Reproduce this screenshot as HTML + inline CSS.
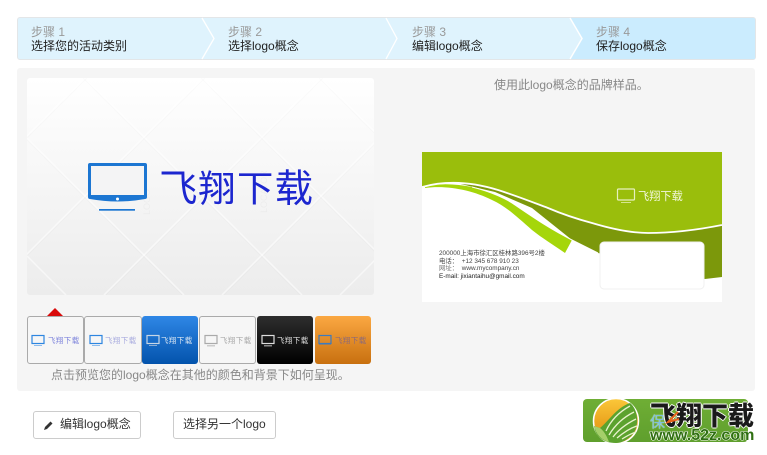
<!DOCTYPE html>
<html><head><meta charset="utf-8">
<style>
html,body{margin:0;padding:0;background:#fff;}
body{width:767px;height:455px;position:relative;overflow:hidden;font-family:"Liberation Sans","Noto Sans CJK SC",sans-serif;font-size:12px;}
.a{position:absolute;white-space:nowrap;}
.s1{color:#999;line-height:14px;font-size:12px;}
.s2{color:#222;line-height:14px;font-size:12px;}
.th{position:absolute;top:316px;height:46px;border:1px solid #aaa;border-radius:3px;box-sizing:content-box;overflow:hidden;}
.th svg{position:absolute;left:3px;top:17px;filter:blur(.3px);}
.th span{position:absolute;left:20px;top:18px;font-size:7.500px;line-height:12px;white-space:nowrap;letter-spacing:.4px;filter:blur(.3px);}
.btn{position:absolute;top:411px;height:26px;border:1px solid #ccc;border-radius:3px;background:#fff;color:#333;line-height:25px;font-size:12px;box-sizing:content-box;}
</style></head><body>

<!-- steps -->
<div class="a" style="left:17px;top:17px;width:739px;height:43px;background:#dff3fd;border:1px solid #e3e6e8;box-sizing:border-box;border-radius:3px;"></div>
<svg class="a" style="left:17px;top:17px" width="739" height="43">
<path d="M554 1 L566 21.500 L554 42 L738 42 L738 3 Q738 1 736 1 Z" fill="#cbecfe"/>
<path d="M185 1 L197 21.500 L185 42 M369 1 L380 21.500 L369 42 M553 1 L565 21.500 L553 42" fill="none" stroke="#fff" stroke-width="1.300"/>
</svg>
<div class="a s1" style="left:31px;top:25px">步骤 1</div>
<div class="a s2" style="left:31px;top:39px">选择您的活动类别</div>
<div class="a s1" style="left:228px;top:25px">步骤 2</div>
<div class="a s2" style="left:228px;top:39px">选择logo概念</div>
<div class="a s1" style="left:412px;top:25px">步骤 3</div>
<div class="a s2" style="left:412px;top:39px">编辑logo概念</div>
<div class="a s1" style="left:596px;top:25px">步骤 4</div>
<div class="a s2" style="left:596px;top:39px">保存logo概念</div>

<!-- panel -->
<div class="a" style="left:17px;top:68px;width:738px;height:323px;background:#f5f5f5;border-radius:3px;"></div>
<div class="a" style="left:494px;top:78px;color:#888;line-height:15px;">使用此logo概念的品牌样品。</div>

<!-- main preview -->
<div class="a" style="left:27px;top:78px;width:347px;height:217px;border-radius:3px;overflow:hidden;background:linear-gradient(#fff,#ececec);">
<svg width="347" height="217" style="position:absolute;left:0;top:0">
<g fill="none" stroke="#fff" stroke-opacity=".55" stroke-width="1.500">
<path d="M58 0 L-159 217 M176 0 L-41 217 M294 0 L77 217 M412 0 L195 217 M530 0 L313 217"/>
<path d="M58 0 L275 217 M176 0 L393 217 M294 0 L511 217 M-60 0 L157 217 M-178 0 L39 217"/>
</g>
<g fill="none" stroke="#000" stroke-opacity=".015" stroke-width="1">
<path d="M60 0 L-157 217 M178 0 L-39 217 M296 0 L79 217 M414 0 L197 217"/>
<path d="M56 0 L273 217 M174 0 L391 217 M292 0 L509 217 M-62 0 L155 217"/>
</g>
<g font-family="Liberation Sans" font-size="9" fill="#000" fill-opacity=".03">
<text transform="translate(123,137) rotate(-90)">LOGO</text>
<text transform="translate(240,135) rotate(-90)">LOCATOR</text>
</g>
</svg>
<svg style="position:absolute;left:61px;top:85px" width="60" height="48" viewBox="0 0 60 48">
<path d="M2 0 H57 Q59 0 59 2 V34 Q59 36 57 36 Q30 41 2 36 Q0 36 0 34 V2 Q0 0 2 0 Z" fill="#1c76d2"/>
<rect x="3" y="3" width="53" height="29" fill="#f4f4f5"/>
<circle cx="29.500" cy="36" r="1.500" fill="#fff"/>
<rect x="11" y="46" width="36" height="1.700" fill="#1c76d2"/>
</svg>
<div style="position:absolute;left:132px;top:87px;font-family:'IPAGothic','Noto Sans CJK SC',sans-serif;font-size:38.500px;line-height:46px;color:#1c26cf;white-space:nowrap;">飞翔下载</div>
</div>

<!-- marker -->
<svg class="a" style="left:47px;top:308px" width="18" height="9"><path d="M0 8 L8 0 L16 8 Z" fill="#d90a0a"/></svg>

<!-- thumbs -->
<div class="th" style="left:27px;width:55px;background:#f6f6f6;"><svg width="15" height="13"><rect x="1" y="1.500" width="12" height="8" fill="none" stroke="#2d86e0" stroke-width="1.200"/><rect x="3" y="11" width="8" height="1" fill="#8dbdee"/></svg><span style="color:#7f85dc">飞翔下载</span></div>
<div class="th" style="left:84px;width:56px;background:#f6f6f6;"><svg width="15" height="13" style="left:4px"><rect x="1" y="1.500" width="12" height="8" fill="none" stroke="#2d86e0" stroke-width="1.200"/><rect x="3" y="11" width="8" height="1" fill="#8dbdee"/></svg><span style="color:#a9acdf">飞翔下载</span></div>
<div class="th" style="left:142px;width:56px;height:48px;border:0;background:linear-gradient(#2f87e6,#0353ac);"><svg width="15" height="13" style="left:4px;top:18px"><rect x="1" y="1.500" width="12" height="8" fill="none" stroke="#c7d6e6" stroke-width="1.200"/><rect x="3" y="11" width="8" height="1" fill="#88acd4"/></svg><span style="color:#d6e4f2;top:19px;left:19px">飞翔下载</span></div>
<div class="th" style="left:199px;width:55px;background:#f6f6f6;"><svg width="15" height="13" style="left:4px"><rect x="1" y="1.500" width="12" height="8" fill="none" stroke="#aaa" stroke-width="1.200"/><rect x="3" y="11" width="8" height="1.500" fill="#ccc"/></svg><span style="color:#aaa">飞翔下载</span></div>
<div class="th" style="left:257px;width:56px;height:48px;border:0;background:linear-gradient(#2e2e2e,#000);"><svg width="15" height="13" style="left:4px;top:18px"><rect x="1" y="1.500" width="12" height="8" fill="none" stroke="#ddd" stroke-width="1.200"/><rect x="3" y="11" width="8" height="1.500" fill="#888"/></svg><span style="color:#ddd;top:19px;left:20px">飞翔下载</span></div>
<div class="th" style="left:315px;width:56px;height:48px;border:0;background:linear-gradient(#fba842,#c8700f);"><svg width="15" height="13" style="left:3px;top:18px"><rect x="1" y="1.500" width="12" height="8" fill="none" stroke="#3c7bc0" stroke-width="1.200"/><rect x="1" y="9" width="12" height="1.500" fill="#3c7bc0"/></svg><span style="color:#8d6a78;top:19px;left:20px">飞翔下载</span></div>

<div class="a" style="left:51px;top:368px;color:#888;line-height:15px;">点击预览您的logo概念在其他的颜色和背景下如何呈现。</div>

<!-- business card -->
<div class="a" style="left:422px;top:152px;width:300px;height:150px;background:#fff;overflow:hidden;">
<svg width="300" height="150" style="position:absolute;left:0;top:0">
<path d="M30 30 C50 30 60 33 76 38 C95 44 110 50 126 56 C140 62 155 67 170 71 C190 77 208 81 226 81 C250 81 275 78 300 73 V125 L283 127 L176 101 L150 88 L110 56 L73 40 Z" fill="#7c980b"/>
<path d="M3 34 C20 31 35 32 50 35 C70 40 85 47 93 53 C115 68 130 78 150 88 L143 101 C130 92 120 86 110 78 C95 65 85 55 70 48 C50 38 25 33 3 36 Z" fill="#a5d60a"/>
<path d="M50 35 C70 40 85 47 93 53 C115 68 130 78 150 88 L176 101" fill="none" stroke="#fff" stroke-width="1"/>
<path d="M0 0 H300 V73 C275 78 250 81 226 81 C208 81 190 77 170 71 C155 67 140 62 126 56 C110 50 95 44 76 38 C50 30 25 28 0 35 Z" fill="#9abe0c"/>
<path d="M0 35 C25 28 50 30 76 38 C95 44 110 50 126 56 C140 62 155 67 170 71 C190 77 208 81 226 81 C250 81 275 78 300 73" fill="none" stroke="#fff" stroke-width="1.800"/>
<rect x="178" y="90" width="104" height="47" rx="4" fill="#fff" stroke="#f0f0f0"/>
<rect x="195.500" y="37" width="17" height="11" rx="1" fill="none" stroke="#e6f0bf" stroke-width="1.200"/>
<rect x="199" y="50" width="10" height="1" fill="#d5e590"/>
</svg>
<div style="position:absolute;left:216px;top:38px;font-size:11.200px;line-height:14px;color:#f2f7dc;white-space:nowrap;filter:blur(.3px);">飞翔下载</div>
<div style="position:absolute;left:17px;top:98px;font-size:6.400px;line-height:7.500px;color:#444;white-space:nowrap;filter:blur(.3px);">200000上海市徐汇区桂林路396号2楼<br>电话：&nbsp; +12 345 678 910 23<br><span style="color:#777">网址：</span>&nbsp; www.mycompany.cn<br><span style="color:#222">E-mail: jixiantaihu@gmail.com</span></div>
</div>

<!-- buttons -->
<div class="btn" style="left:33px;width:106px;">
<svg style="position:absolute;left:9px;top:8px" width="11" height="11" viewBox="0 0 11 11"><path d="M1 10 L2 7 L7.500 1.500 L9.500 3.500 L4 9 Z" fill="#333"/></svg>
<span style="position:absolute;left:26px;top:0;">编辑logo概念</span></div>
<div class="btn" style="left:173px;width:101px;"><span style="position:absolute;left:9px;top:0;">选择另一个logo</span></div>

<!-- badge -->
<div class="a" style="left:583px;top:399px;width:165px;height:43px;background:linear-gradient(#6fae35,#5f9f2d);border-radius:4px;"></div>
<svg class="a" style="left:583px;top:396px" width="62" height="50">
<defs><linearGradient id="g" x1="0" y1="0" x2="0" y2="1"><stop offset="0" stop-color="#fbc83a"/><stop offset=".55" stop-color="#eba31e"/><stop offset="1" stop-color="#e59a1c"/></linearGradient></defs>
<circle cx="33" cy="25" r="22.500" fill="url(#g)" stroke="#fff" stroke-width="1.500"/>
<path d="M33 47 C19 47 12 39 11 30 L17 32 C25 26 33 12 47 7 C56 14 57 33 47 41 C42 45 38 47 33 47 Z" fill="#5ca22e"/>
<path d="M11 30 L17 32 C22 36 24 41 26 46 C18 44 13 38 11 30 Z" fill="#a5cf6a"/>
<path d="M23 35 C28 24 36 16 47 10 M26 39 C32 29 41 21 51 16 M30 41 C36 33 45 27 53 23 M34 42 C40 37 47 32 54 30 M39 43 C44 40 49 37 53 36" fill="none" stroke="#e8f2cc" stroke-width="1.300"/>
</svg>
<div class="a" style="left:650px;top:414px;font-size:15px;line-height:17px;color:#7fc0dc;text-shadow:0 0 1px #fff;">保</div>
<div class="a" style="left:650px;top:401px;font-family:'Noto Sans CJK SC',sans-serif;font-weight:900;font-size:26px;line-height:28px;color:#1a1a1a;text-shadow:1px 0 0 #fff,-1px 0 0 #fff,0 1px 0 #fff,0 -1px 0 #fff;">飞翔下载</div>
<svg class="a" style="left:665px;top:410px" width="16" height="15"><path d="M13 2 L3 12 L14 9" fill="none" stroke="#e8641a" stroke-width="2"/></svg>
<div class="a" style="left:650px;top:427px;font-family:'Liberation Sans',sans-serif;font-weight:bold;font-size:16px;line-height:17px;color:#2f6f12;text-shadow:.7px 0 0 #fff,-.7px 0 0 #fff,0 .7px 0 #fff,0 -.7px 0 #fff;">www.52z.com</div>

</body></html>
